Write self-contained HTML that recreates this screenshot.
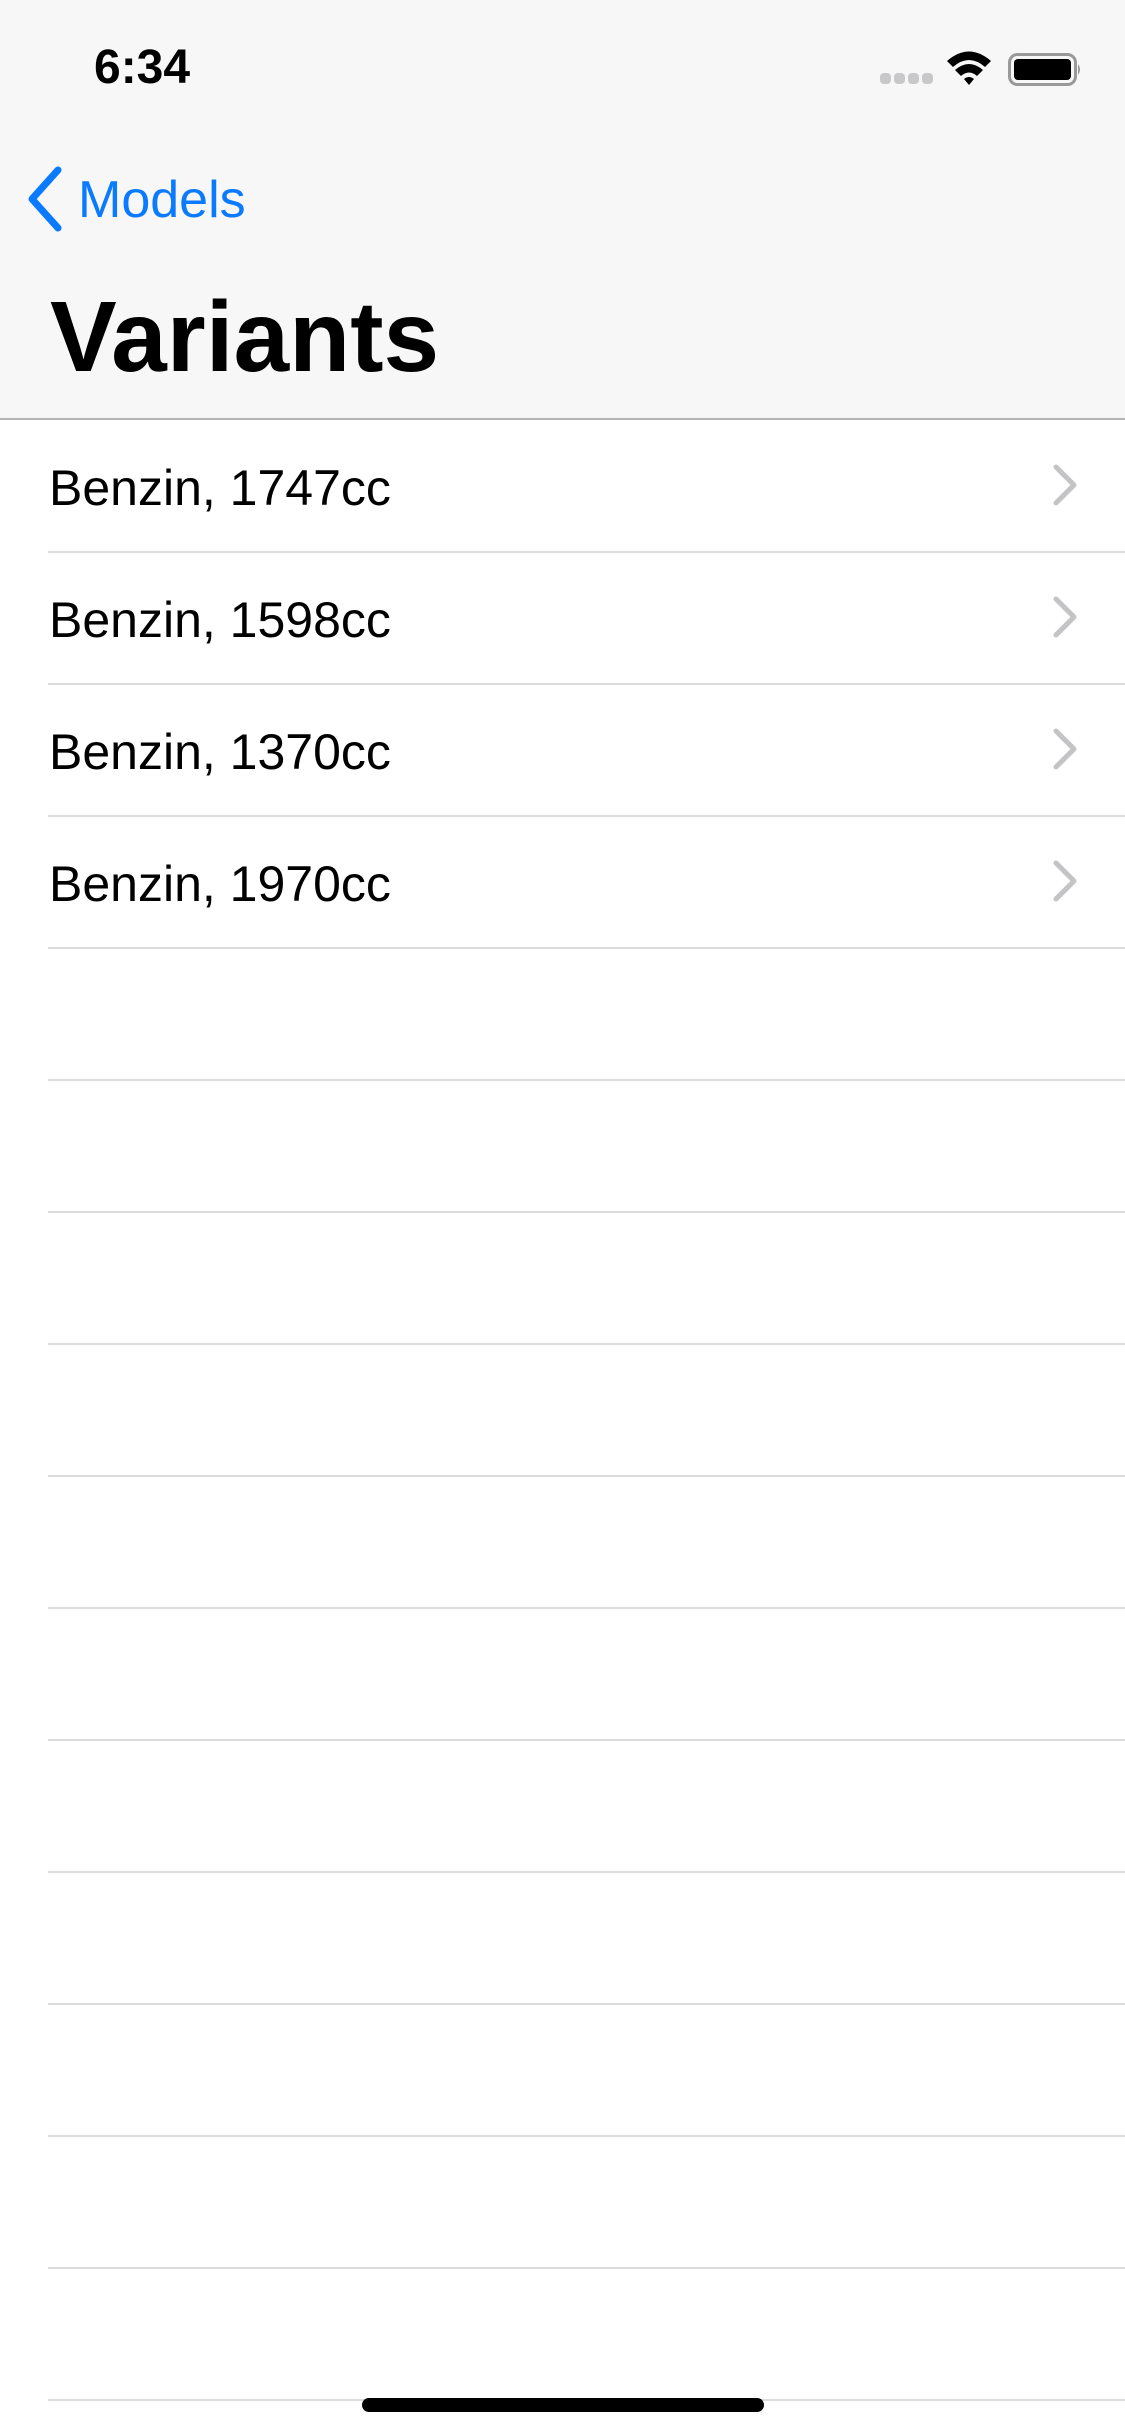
<!DOCTYPE html>
<html><head><meta charset="utf-8"><style>
*{margin:0;padding:0;box-sizing:border-box}
html,body{width:1125px;height:2436px;background:#fff;overflow:hidden;font-family:"Liberation Sans",sans-serif}
.hdr{position:absolute;left:0;top:0;width:1125px;height:420px;background:#f7f7f7;border-bottom:2px solid #b5b5b8}
.time{position:absolute;left:94px;top:40px;font-size:48px;font-weight:bold;color:#000}
.back{position:absolute;left:78px;top:170px;font-size:52px;color:#0a7aff}
.title{position:absolute;left:50px;top:280px;font-size:100px;font-weight:bold;color:#000;letter-spacing:0}
.row{position:absolute;left:0;width:1125px;height:132px}
.row .t{position:absolute;left:49px;top:38px;font-size:50px;color:#000}
.sep{position:absolute;left:48px;right:0;height:2px;background:#dcdcde}
.home{position:absolute;left:362px;top:2398px;width:402px;height:14px;border-radius:7px;background:#000}
</style></head><body>
<div class="hdr"></div>
<div class="time">6:34</div>
<svg style="position:absolute;left:878px;top:48px" width="210" height="44" viewBox="878 48 210 44">
<g fill="#c8c8ca"><rect x="880" y="73" width="11" height="11" rx="4"/><rect x="894" y="73" width="11" height="11" rx="4"/><rect x="908" y="73" width="11" height="11" rx="4"/><rect x="922" y="73" width="11" height="11" rx="4"/></g>
<path d="M947 61 Q969 42 991 61 L985 67 Q969 53 953 67 Z M955 70 Q969 58 983 70 L977 76 Q969 69 961 76 Z M964 79 Q969 75 974 79 L969 85 Z" fill="#000"/>
<rect x="1009.5" y="54.5" width="66" height="30" rx="8" fill="none" stroke="#999" stroke-width="3"/>
<rect x="1014" y="59" width="57" height="21" rx="4" fill="#000"/>
<path d="M1078 64 Q1082 69.5 1078 75 Z" fill="#999"/>
</svg>
<svg style="position:absolute;left:20px;top:160px" width="50" height="80" viewBox="20 160 50 80"><path d="M58 170 L32 199 L58 228" fill="none" stroke="#0a7aff" stroke-width="7" stroke-linecap="round" stroke-linejoin="round"/></svg>
<div class="back">Models</div>
<div class="title">Variants</div>

<div class="row" style="top:421px"><div class="t">Benzin, 1747cc</div></div>
<div class="row" style="top:553px"><div class="t">Benzin, 1598cc</div></div>
<div class="row" style="top:685px"><div class="t">Benzin, 1370cc</div></div>
<div class="row" style="top:817px"><div class="t">Benzin, 1970cc</div></div>
<svg style="position:absolute;left:1040px;top:420px" width="60" height="530" viewBox="1040 420 60 530"><g fill="none" stroke="#c4c4c7" stroke-width="5" stroke-linecap="round" stroke-linejoin="round">
<path d="M1056 467 L1074 485 L1056 503"/><path d="M1056 599 L1074 617 L1056 635"/><path d="M1056 731 L1074 749 L1056 767"/><path d="M1056 863 L1074 881 L1056 899"/></g></svg>

<div class="sep" style="top:551px"></div>
<div class="sep" style="top:683px"></div>
<div class="sep" style="top:815px"></div>
<div class="sep" style="top:947px"></div>
<div class="sep" style="top:1079px"></div>
<div class="sep" style="top:1211px"></div>
<div class="sep" style="top:1343px"></div>
<div class="sep" style="top:1475px"></div>
<div class="sep" style="top:1607px"></div>
<div class="sep" style="top:1739px"></div>
<div class="sep" style="top:1871px"></div>
<div class="sep" style="top:2003px"></div>
<div class="sep" style="top:2135px"></div>
<div class="sep" style="top:2267px"></div>
<div class="sep" style="top:2399px"></div>
<div class="home"></div>
</body></html>
